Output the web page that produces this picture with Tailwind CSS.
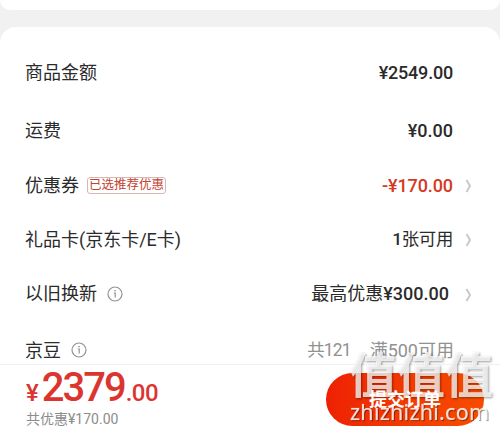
<!DOCTYPE html>
<html lang="zh-CN">
<head>
<meta charset="utf-8">
<title>确认订单</title>
<script src="https://cdn.jsdelivr.net/npm/@tailwindcss/browser@4"></script>
</head>
<body class="relative flex h-[431px] w-[500px] flex-col overflow-hidden bg-white font-[Roboto,'Noto_Sans_CJK_SC',sans-serif] text-[18px] text-[#2b2b2b]">
  <main class="h-[364px] shrink-0 overflow-hidden bg-[#f1f1f1]">
    <div class="h-[10px] rounded-b-[14px] bg-white"></div>
    <section class="mt-[17px] h-[370px] rounded-t-[16px] bg-white pt-[16px] pr-[26px] pl-[25px]">
      <div class="flex h-[58px] items-center justify-between pr-[21px]">
        <span>商品金额</span><span class="font-medium tracking-[-0.2px]">¥2549.00</span>
      </div>
      <div class="flex h-[58px] items-center justify-between pr-[21px]">
        <span>运费</span><span class="font-medium">¥0.00</span>
      </div>
      <div class="flex h-[53px] items-center">
        <span>优惠券</span>
        <span class="ml-[8px] flex h-[17px] w-[79px] items-center justify-center rounded-[3px] border border-[#d5b8b4] text-[12.5px] leading-none whitespace-nowrap text-[#c4432f]">已选推荐优惠</span>
        <span class="ml-auto font-medium tracking-[-0.1px] text-[#d23a24]">-¥170.00</span>
        <svg class="ml-[12px] h-[14px] w-[9px]" viewBox="0 0 9 14" fill="none" stroke="#c9c9c9" stroke-width="2"><path d="M1.5 1 L5 7 L1.5 13"/></svg>
      </div>
      <div class="flex h-[55px] items-center">
        <span>礼品卡(京东卡/E卡)</span>
        <span class="ml-auto text-[17.4px] tracking-[-0.3px]"><span class="font-medium">1</span>张可用</span>
        <svg class="ml-[12px] h-[14px] w-[9px]" viewBox="0 0 9 14" fill="none" stroke="#c9c9c9" stroke-width="2"><path d="M1.5 1 L5 7 L1.5 13"/></svg>
      </div>
      <div class="flex h-[53px] items-center">
        <span>以旧换新</span>
        <svg class="ml-[10px] size-[16px]" viewBox="0 0 16 16" fill="none" stroke="#929292" stroke-width="1.2"><circle cx="8" cy="8" r="7"/><path d="M6.8 7 H8.2 V11.5 M7.3 4.7 H8.8"/></svg>
        <span class="ml-auto">最高优惠<span class="font-medium">¥300.00</span></span>
        <svg class="mt-[3px] ml-[16px] h-[14px] w-[9px]" viewBox="0 0 9 14" fill="none" stroke="#c9c9c9" stroke-width="2"><path d="M1.5 1 L5 7 L1.5 13"/></svg>
      </div>
      <div class="flex h-[60px] items-center pr-[20px]">
        <span>京豆</span>
        <svg class="ml-[10px] size-[16px]" viewBox="0 0 16 16" fill="none" stroke="#929292" stroke-width="1.2"><circle cx="8" cy="8" r="7"/><path d="M6.8 7 H8.2 V11.5 M7.3 4.7 H8.8"/></svg>
        <span class="ml-auto text-[17.5px] tracking-[-0.9px] text-[#919191]">共121</span><span class="ml-[19px] text-[#919191]">满500可用</span>
      </div>
    </section>
  </main>
  <footer class="flex h-[67px] shrink-0 justify-between border-t border-[#f1f1f1] bg-white pr-[16px] pl-[26px]">
    <div class="flex flex-col">
      <div class="flex h-[44px] items-baseline leading-[45px] font-medium text-[#dc3530]">
        <span class="text-[24px]">¥</span><span class="ml-[3px] text-[40px] tracking-[-2px]">2379</span><span class="ml-[1px] text-[24px] tracking-[-0.5px]">.00</span>
      </div>
      <div class="text-[14px] leading-[20px] text-[#8c8c8c]">共优惠¥170.00</div>
    </div>
    <div class="mt-[8px] flex h-[53px] w-[158px] items-center justify-center rounded-full bg-linear-to-r from-[#ee2003] to-[#f74c00] text-[18px] font-bold text-white">
      <span class="relative z-20">提交订单</span>
    </div>
  </footer>
  <!-- Site watermark over the lower right corner -->
  <div class="pointer-events-none absolute top-[347px] left-[349px] z-10 h-[84px] w-[151px]">
    <svg class="size-full overflow-visible" viewBox="0 0 151 84" font-family="'Noto Sans CJK SC', sans-serif">
      <g font-size="48" font-weight="700">
        <text x="0" y="46" fill="#fff" fill-opacity=".76" textLength="144" class="[filter:drop-shadow(1.5px_1.5px_0.8px_rgb(0_0_0/0.5))]">值值值</text>
      </g>
      <g font-family="'Noto Sans', sans-serif" font-size="21.5">
        <text x="1" y="73" fill="#fff" fill-opacity=".85" stroke="#fff" stroke-opacity=".3" stroke-width=".5" textLength="139" class="[filter:drop-shadow(1.3px_1.3px_0.7px_rgb(0_0_0/0.45))]">zhizhizhi.com</text>
      </g>
    </svg>
  </div>
</body>
</html>
